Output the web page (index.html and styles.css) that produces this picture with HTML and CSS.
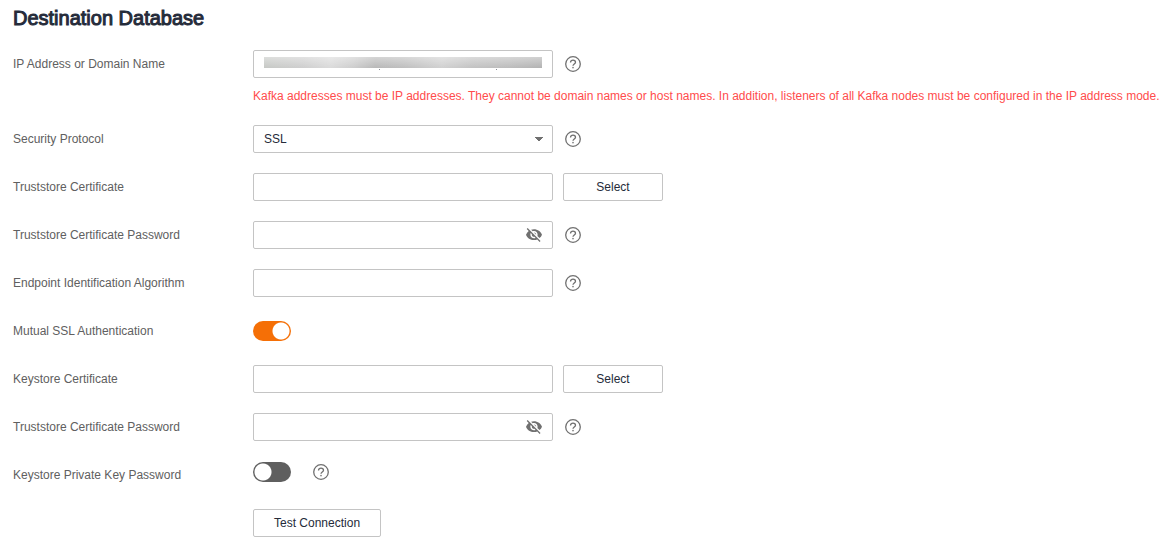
FILE: index.html
```html
<!DOCTYPE html>
<html lang="en">
<head>
<meta charset="utf-8">
<title>Destination Database</title>
<link rel="stylesheet" href="styles.css">
</head>
<body>
<svg class="sprite" aria-hidden="true">
  <symbol id="help" viewBox="0 0 16 16">
    <circle cx="8" cy="8" r="7.300" fill="none" stroke="currentColor" stroke-width="1.300"/>
    <path d="M5.500 6.500C5.500 4.900 6.500 4.100 8 4.100s2.500.9 2.500 2.200c0 1.600-2.500 1.900-2.500 3.500" fill="none" stroke="currentColor" stroke-width="1.300"/>
    <rect x="7.300" y="10.900" width="1.400" height="1.400" fill="currentColor"/>
  </symbol>
  <symbol id="eye-off" viewBox="1 2.500 22 20">
    <path fill="currentColor" d="M12 7c2.760 0 5 2.240 5 5 0 .65-.13 1.260-.36 1.830l2.920 2.920c1.510-1.260 2.700-2.890 3.430-4.750-1.730-4.390-6-7.500-11-7.500-1.400 0-2.740.25-3.980.7l2.160 2.160C10.740 7.130 11.350 7 12 7zM2 4.270l2.280 2.280.46.46C3.080 8.300 1.780 10.020 1 12c1.730 4.390 6 7.500 11 7.500 1.550 0 3.030-.3 4.380-.84l.42.42L19.730 22 21 20.730 3.270 3 2 4.270zM7.530 9.800l1.550 1.550c-.05.21-.08.43-.08.65 0 1.660 1.340 3 3 3 .22 0 .44-.03.65-.08l1.550 1.550c-.67.33-1.410.53-2.200.53-2.760 0-5-2.240-5-5 0-.79.2-1.530.53-2.200zm4.310-.78l3.150 3.150.02-.16c0-1.660-1.340-3-3-3l-.17.01z"/>
  </symbol>
</svg>
<main>
  <h1 class="title">Destination Database</h1>
  <form class="form">
    <div class="row">
      <label class="label" for="address">IP Address or Domain Name</label>
      <div class="stack">
        <div class="controls">
          <input class="field masked" id="address" type="text">
          <button class="help" type="button" aria-label="Address help"><svg><use href="#help"/></svg></button>
        </div>
        <p class="error">Kafka addresses must be IP addresses. They cannot be domain names or host names. In addition, listeners of all Kafka nodes must be configured in the IP address mode.</p>
      </div>
    </div>
    <div class="row">
      <label class="label" for="protocol">Security Protocol</label>
      <div class="controls">
        <select class="field select" id="protocol"><option>SSL</option></select>
        <button class="help" type="button" aria-label="Protocol help"><svg><use href="#help"/></svg></button>
      </div>
    </div>
    <div class="row">
      <label class="label" for="truststore">Truststore Certificate</label>
      <div class="controls">
        <input class="field" id="truststore" type="text">
        <button class="button" type="button">Select</button>
      </div>
    </div>
    <div class="row">
      <label class="label" for="trust-password">Truststore Certificate Password</label>
      <div class="controls">
        <div class="secret">
          <input class="field" id="trust-password" type="password">
          <button class="reveal" type="button" aria-label="Show password"><svg><use href="#eye-off"/></svg></button>
        </div>
        <button class="help" type="button" aria-label="Password help"><svg><use href="#help"/></svg></button>
      </div>
    </div>
    <div class="row">
      <label class="label" for="algorithm">Endpoint Identification Algorithm</label>
      <div class="controls">
        <input class="field" id="algorithm" type="text">
        <button class="help" type="button" aria-label="Algorithm help"><svg><use href="#help"/></svg></button>
      </div>
    </div>
    <div class="row">
      <label class="label" for="mutual">Mutual SSL Authentication</label>
      <div class="controls">
        <input class="toggle" id="mutual" type="checkbox" role="switch" checked>
      </div>
    </div>
    <div class="row">
      <label class="label" for="keystore">Keystore Certificate</label>
      <div class="controls">
        <input class="field" id="keystore" type="text">
        <button class="button" type="button">Select</button>
      </div>
    </div>
    <div class="row">
      <label class="label" for="key-password">Truststore Certificate Password</label>
      <div class="controls">
        <div class="secret">
          <input class="field" id="key-password" type="password">
          <button class="reveal" type="button" aria-label="Show password"><svg><use href="#eye-off"/></svg></button>
        </div>
        <button class="help" type="button" aria-label="Password help"><svg><use href="#help"/></svg></button>
      </div>
    </div>
    <div class="row">
      <label class="label" for="private-key">Keystore Private Key Password</label>
      <div class="controls compact">
        <input class="toggle" id="private-key" type="checkbox" role="switch">
        <button class="help" type="button" aria-label="Private key help"><svg><use href="#help"/></svg></button>
      </div>
    </div>
    <div class="row">
      <span></span>
      <div class="controls">
        <button class="button" type="button">Test Connection</button>
      </div>
    </div>
  </form>
</main>
</body>
</html>
```
FILE: styles.css
```css
* {
  box-sizing: border-box;
}

body {
  margin: 0;
  padding: 8px 0 16px 13px;
  background: #fff;
  color: #252b3a;
  font-family: "Liberation Sans", Arial, sans-serif;
  font-size: 12px;
}

input,
select,
button {
  margin: 0;
  font: inherit;
}

.sprite {
  position: absolute;
  width: 0;
  height: 0;
}

.title {
  margin: 0 0 22px;
  font-size: 20px;
  line-height: 20px;
  font-weight: 400;
  -webkit-text-stroke: 1px #252b3a;
}

.form {
  display: grid;
  gap: 20px;
}

.row {
  display: grid;
  grid-template-columns: 240px 1fr;
  align-items: start;
}

.label {
  color: #606060;
  line-height: 28px;
}

.controls {
  display: flex;
  align-items: center;
  min-height: 28px;
  gap: 10px;
}

.compact {
  min-height: 22px;
  gap: 20px;
}

.field {
  display: block;
  width: 300px;
  height: 28px;
  padding: 0 10px;
  border: 1px solid #c4c4c4;
  border-radius: 2px;
  background: #fff;
  color: #252b3a;
}

.masked {
  padding: 6px 10px 9px;
  background:
    linear-gradient(#8a8d94, #8a8d94) 125px 18px / 1px 1px no-repeat,
    linear-gradient(#8a8d94, #8a8d94) 242px 18px / 1px 1px no-repeat,
    linear-gradient(#ffffff66, #ffffff00) content-box content-box,
    linear-gradient(90deg, #c6c8c5, #cecece 14%, #dadada 24%, #cdcdcd 32%, #b8b8b8 40%, #bebebe 50%, #d0d0d0 64%, #c2c2c2 75%, #bcbcbc 88%, #b2b2b2) content-box content-box;
}

.select {
  appearance: none;
  background: conic-gradient(from -42deg at 50% 100%, transparent 0deg) no-repeat;
  background:
    linear-gradient(to top right, transparent 50%, #707070 51%) 280px 11px / 5px 5px no-repeat,
    linear-gradient(to top left, transparent 50%, #707070 51%) 285px 11px / 5px 5px no-repeat;
}

.error {
  margin: 10px 0 0;
  color: #ff4c4c;
  line-height: 17px;
}

.help,
.reveal {
  display: flex;
  padding: 2px;
  border: 0;
  background: none;
  color: #707070;
}

.help svg,
.reveal svg {
  display: block;
  width: 16px;
  height: 16px;
}

.secret {
  position: relative;
}

.reveal {
  position: absolute;
  top: 4px;
  right: 9px;
}

.button {
  min-width: 100px;
  height: 28px;
  padding: 0 20px;
  border: 1px solid #c4c4c4;
  border-radius: 2px;
  background: #fff;
  color: #252b3a;
}

.toggle {
  appearance: none;
  width: 38px;
  height: 20px;
  border-radius: 10px;
  background: radial-gradient(circle at 10px 10px, #fff 8px, transparent 9px) #5f5f5f;
}

.toggle:checked {
  background: radial-gradient(circle at 28px 10px, #fff 8px, transparent 9px) #f56f06;
}
```
